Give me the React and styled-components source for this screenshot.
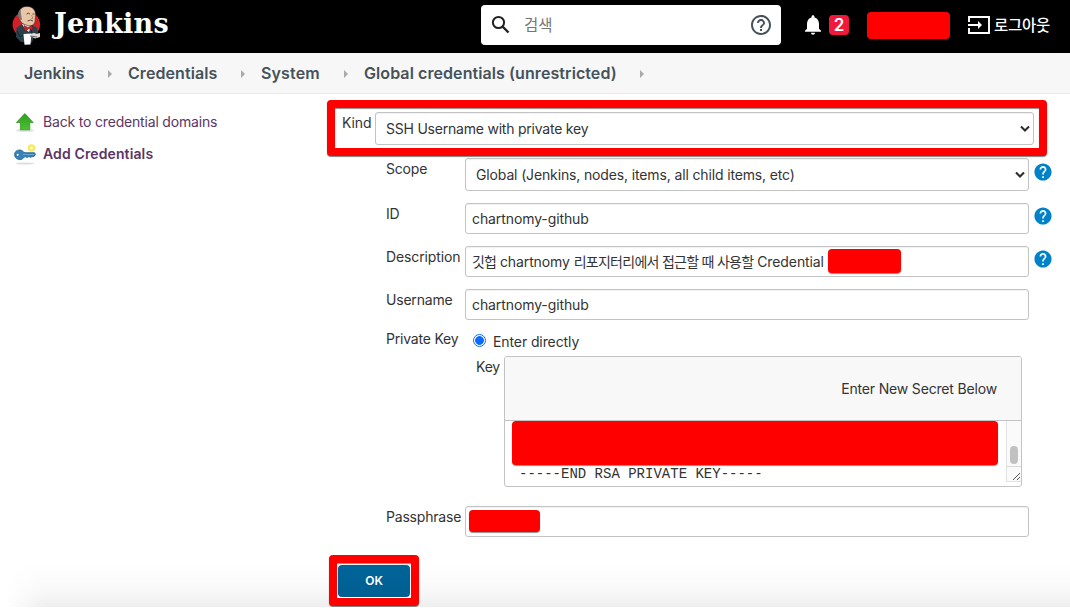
import React from "react";
import styled, { createGlobalStyle, css } from "styled-components";

const GlobalStyle = createGlobalStyle`
  * { box-sizing: border-box; }
  body {
    margin: 0;
    background: #fff;
    color: #333;
    font: 14px/20px Inter, "Noto Sans CJK KR", sans-serif;
  }
`;

const Page = styled.div`
  height: 607px;
  display: flex;
  flex-direction: column;
  background: #fff;
`;

const Header = styled.header`
  height: 53px;
  flex: none;
  display: flex;
  align-items: center;
  background: #000;
  color: #fff;
  padding: 0 0 3px 12px;
`;

const Brand = styled.a`
  flex: none;
  display: flex;
  align-items: center;
  width: 469px;
`;

const BrandName = styled.span`
  font: bold 27px/40px "DejaVu Serif", serif;
  letter-spacing: 0.2px;
  margin: -2px 0 0 13px;
`;

const SearchBox = styled.div`
  flex: none;
  width: 300px;
  height: 40px;
  display: flex;
  align-items: center;
  padding: 0 8px 0 10px;
  border-radius: 4px;
  background: #fff;
  color: #757575;
`;

const SearchText = styled.span`
  flex: 1;
  margin: -2px 0 0 13px;
  font: 15.5px/22px "Noto Sans CJK KR", sans-serif;
`;

const Alerts = styled.div`
  flex: none;
  display: flex;
  align-items: center;
  gap: 8px;
  margin-left: 24px;
`;

const Badge = styled.span`
  width: 20px;
  height: 20px;
  border-radius: 4px;
  background: #f0193c;
  font: 600 17px/20px Inter, sans-serif;
  text-align: center;
`;

const Redaction = styled.span`
  display: block;
  flex: none;
  width: ${(p) => p.$w}px;
  height: ${(p) => p.$h}px;
  border-radius: 4px;
  background: #f00;
  box-shadow: 0 1px 1px rgba(0, 0, 0, 0.45);
`;

const UserSlot = styled.div`
  margin-left: 18px;
`;

const Logout = styled.a`
  display: flex;
  align-items: center;
  margin-left: 18px;
  gap: 4px;
  white-space: nowrap;
  font: 500 15.5px/22px "Noto Sans CJK KR", sans-serif;
  letter-spacing: -0.3px;
`;

const LogoutText = styled.span`
  margin-top: -3px;
`;

const Breadcrumbs = styled.nav`
  height: 41px;
  flex: none;
  display: flex;
  align-items: center;
  padding-left: 24px;
  background: #f7f7f7;
  border-bottom: 1px solid #e6e9ea;
  color: #45525b;
  font-size: 16px;
  font-weight: 600;
`;

const Crumb = styled.span`
  letter-spacing: ${(p) => p.$ls}px;
  width: ${(p) => p.$w}px;
  white-space: nowrap;
`;

const Arrow = styled.i`
  margin: 1px 16px 0 24px;
  border-left: 4px solid #aaa;
  border-top: 4px solid transparent;
  border-bottom: 4px solid transparent;
`;

const Body = styled.div`
  flex: 1;
  display: flex;
  background:
    linear-gradient(to right, #fff 6px, rgba(255, 255, 255, 0) 46px),
    linear-gradient(to bottom, #fff 466px, #fcfcfc 484px, #f7f7f7 499px, #eee 513px);
`;

const Sidebar = styled.aside`
  width: 327px;
  flex: none;
  padding: 16px 0 0 14px;
`;

const Task = styled.a`
  display: flex;
  align-items: center;
  height: 24px;
  margin-bottom: 8px;
  gap: 7px;
  color: #5c3566;
  font-weight: ${(p) => (p.$active ? 600 : 400)};
  letter-spacing: ${(p) => p.$ls}px;
`;

const Form = styled.main`
  width: 725px;
  padding-top: 6px;
`;

const highlight = css`
  border: 8px solid #f00;
  border-radius: 4px;
  box-shadow: 0 1px 1px rgba(0, 0, 0, 0.5), inset 0 1px 1px rgba(0, 0, 0, 0.45);
  background: #fff;
`;

const KindFrame = styled.section`
  ${highlight}
  width: 720px;
  height: 56px;
  display: flex;
  padding: 4px 5px 0 7px;
`;

const Label = styled.label`
  flex: none;
  width: ${(p) => p.$w || 79}px;
  padding-top: ${(p) => p.$top}px;
  letter-spacing: ${(p) => p.$ls ?? -0.2}px;
  white-space: nowrap;
`;

const Row = styled.div`
  display: flex;
  align-items: flex-start;
  padding-left: 59px;
  margin-top: ${(p) => p.$gap}px;
`;

const Field = styled.div`
  width: ${(p) => p.$w || 564}px;
  height: ${(p) => (p.$select ? 33 : 31)}px;
  flex: none;
  display: flex;
  align-items: center;
  justify-content: ${(p) => (p.$select ? "space-between" : "flex-start")};
  padding: ${(p) => (p.$select ? "1px 3px 0 10px" : "1px 3px 0 6px")};
  border: 1px solid #c3c3c3;
  border-radius: 3px;
  background: #fff;
  box-shadow: inset 0 1px 1px rgba(0, 0, 0, 0.06);
  letter-spacing: ${(p) => p.$ls ?? -0.1}px;
  white-space: nowrap;
`;

const SecretField = styled(Field)`
  padding: 0 3px 1px;
`;

const Korean = styled.span`
  letter-spacing: ${(p) => p.$ls}px;
`;

const InlineMask = styled.div`
  margin: -2px 0 0 4px;
`;

const Help = styled.span`
  margin: ${(p) => p.$top}px 0 0 5px;
  height: 18px;
`;

const Radio = styled.span`
  width: 13px;
  height: 13px;
  margin: 5px 7px 0 8px;
  border: 1px solid #0a6cff;
  border-radius: 50%;
  background: radial-gradient(circle, #0a6cff 4px, #fff 4.7px);
`;

const SecretBox = styled.div`
  width: 518px;
  height: 131px;
  border: 1px solid #c3c3c3;
  border-radius: 3px;
  overflow: hidden;
  background: #fff;
`;

const SecretHeader = styled.div`
  height: 64px;
  padding: 22px 24px 0 0;
  border-bottom: 1px solid #c3c3c3;
  background: #f8f8f8;
  text-align: right;
  letter-spacing: -0.17px;
`;

const SecretBody = styled.div`
  display: flex;
  justify-content: space-between;
  padding-left: 7px;
`;

const KeyText = styled.code`
  display: block;
  padding: 1px 0 0 7px;
  font: 14px/17px "Courier New", "Liberation Mono", monospace;
`;

const Scrollbar = styled.div`
  width: 15px;
  height: 61px;
  display: flex;
  flex-direction: column;
  background: #fafafa;
  border-left: 1px solid #e2e2e2;
  border-bottom: 1px solid #e2e2e2;
`;

const Track = styled.div`
  height: 46px;
  flex: none;
  padding: 25px 0 0 3px;
  border-bottom: 1px solid #d8d8d8;
`;

const Thumb = styled.div`
  width: 8px;
  height: 18px;
  border-radius: 4px;
  background: #c1c1c1;
`;

const ButtonFrame = styled.div`
  ${highlight}
  width: 90px;
  height: 51px;
  margin: 18px 0 0 2px;
  padding: 2px 1px 0;
`;

const Button = styled.button`
  display: block;
  width: 72px;
  height: 32px;
  padding: 0;
  border: 0;
  border-radius: 4px;
  background: linear-gradient(#006499, #005f92);
  color: #fff;
  font: 600 12px/32px Inter, sans-serif;
`;

const Butler = () => (
  <svg width="29" height="39" viewBox="0 0 29 39">
    <ellipse cx="14.3" cy="18.5" rx="13.8" ry="13" fill="#d51f27" />
    <path d="M9 18.500 4.500 22 4 31 9 36 20 36.500 22 30 26 29 25 22 19 18Z" fill="#28424d" />
    <path d="M5 25 8 31 12 28M20 22 19 28" fill="none" stroke="#142830" strokeWidth="1" />
    <path d="M10 18 13 23 17 26 19 19Z" fill="#eee" />
    <path d="M6.500 10C6.500 3 10 .4 15 .4c6 0 8.500 4 8.500 8l-.5 7c-1 4-4 5-7.500 4-5-1-8-4-9-9.400Z" fill="#e9c6a5" stroke="#392f2b" strokeWidth=".6" />
    <path d="M6.500 11C5 9 6.500 5 8.500 3.500l.5 5 1 5-2 1Z" fill="#7b746c" />
    <path d="M14.500 8q2-1.500 3.500 0M20.500 8h2M15.500 15q3-2 5.500 0" fill="none" stroke="#5b483f" strokeWidth="1" />
    <path d="m19.500 9 1.500 3.500h-2" fill="none" stroke="#a77b5c" strokeWidth=".8" />
    <path d="m12 19.500 4 2 4-2 1 5-4-2-4 3Z" fill="#d51f27" stroke="#6c1015" strokeWidth=".5" />
    <path d="m11.500 28 8-.5-1 11-6 .2Z" fill="#fff" />
    <path d="M19 28q4-2 5 0l4-1v4l-5 1.500-4-2Z" fill="#e7d8cb" />
    <path d="M18 30l7 1" stroke="#314852" strokeWidth=".8" />
  </svg>
);

const SearchIcon = () => (
  <svg width="20" height="20" viewBox="0 0 20 20" fill="none" stroke="#222" strokeWidth="2">
    <circle cx="7.5" cy="7.5" r="5.6" />
    <path d="m11.5 11.5 6 6" strokeWidth="2.4" />
  </svg>
);

const HelpOutline = () => (
  <svg width="24" height="24" viewBox="0 0 24 24" fill="#45525b">
    <path d="M11 18h2v-2h-2v2zm1-16C6.480 2 2 6.480 2 12s4.480 10 10 10 10-4.480 10-10S17.520 2 12 2zm0 18c-4.410 0-8-3.590-8-8s3.590-8 8-8 8 3.590 8 8-3.590 8-8 8zm0-14c-2.210 0-4 1.790-4 4h2c0-1.100.9-2 2-2s2 .9 2 2c0 2-3 1.750-3 5h2c0-2.250 3-2.500 3-5 0-2.210-1.790-4-4-4z" />
  </svg>
);

const Bell = () => (
  <svg width="16" height="20" viewBox="4 2.5 16 19.5" fill="#fff">
    <path d="M12 22c1.1 0 2-.9 2-2h-4c0 1.1.89 2 2 2zm6-6v-5c0-3.07-1.64-5.64-4.5-6.32V4c0-.83-.67-1.5-1.5-1.5s-1.5.67-1.5 1.5v.68C7.63 5.36 6 7.92 6 11v5l-2 2v1h16v-1l-2-2z" />
  </svg>
);

const LogoutIcon = () => (
  <svg width="22" height="18" viewBox="0 0 22 18" fill="none" stroke="#fff" strokeWidth="1.9">
    <path d="M1 6V1h20v16H1v-5M0 9h12" />
    <path d="m10 5 4 4-4 4Z" fill="#fff" stroke="none" />
  </svg>
);

const UpArrow = () => (
  <svg width="22" height="20" viewBox="0 0 22 20">
    <ellipse cx="11" cy="18.500" rx="9" ry="1.300" fill="#ddd" />
    <path d="M10.800 1.500 19.200 10.500h-3.400v7.300H6.400v-7.300H2.400Z" fill="url(#green)" stroke="#2b8f1c" strokeWidth=".7" />
    <defs>
      <linearGradient id="green" x2="0" y2="1">
        <stop stopColor="#2e9d1d" />
        <stop offset="1" stopColor="#4cc232" />
      </linearGradient>
    </defs>
  </svg>
);

const KeyIcon = () => (
  <svg width="22" height="22" viewBox="0 0 22 22">
    <ellipse cx="11" cy="20.5" rx="9" ry="1" fill="#ddd" />
    <circle cx="17.5" cy="5" r="3.7" fill="#f8eb59" />
    <circle cx="17.5" cy="5" r="1.5" fill="#fffbc5" />
    <path d="M5.500 7C9 7 9 9.500 11 9.700h9.500l1 1.800-1.500 2h-2l-1.500 1-1.500-1-2 1-2-1C9 16 7 17 5 16.500-1 15.500-1 7 5.500 7Z" fill="#3684ba" stroke="#225f91" strokeWidth=".8" />
    <circle cx="3.7" cy="11.800" r="1.4" fill="#fff" stroke="#225f91" strokeWidth=".6" />
    <path d="M9 11.500h11" stroke="#75afd6" strokeWidth=".8" />
  </svg>
);

const Chevron = () => (
  <svg width="10" height="8" viewBox="0 0 10 8" fill="none" stroke="#2d2d2d" strokeWidth="2.1">
    <path d="m1 1.5 4 4 4-4" />
  </svg>
);

const HelpIcon = ({ top }) => (
  <Help $top={top}>
    <svg width="18" height="18" viewBox="1.5 1.5 21 21" fill="#0082cb">
      <path d="M12 2C6.48 2 2 6.48 2 12s4.480 10 10 10 10-4.480 10-10S17.520 2 12 2zm1 17h-2v-2h2v2zm2.070-7.750-.9.920C13.450 12.900 13 13.500 13 15h-2v-.5c0-1.100.450-2.100 1.170-2.830l1.240-1.260c.370-.360.590-.860.590-1.410 0-1.100-.9-2-2-2s-2 .9-2 2H8c0-2.210 1.790-4 4-4s4 1.790 4 4c0 .880-.360 1.680-.930 2.250z" />
    </svg>
  </Help>
);

const Grip = () => (
  <svg width="14" height="14" viewBox="0 0 14 14" stroke="#555" strokeWidth="1">
    <path d="m6 13 7-7M10 13l3-3" />
  </svg>
);

export default function App() {
  return (
    <Page>
      <GlobalStyle />
      <Header>
        <Brand>
          <Butler />
          <BrandName>Jenkins</BrandName>
        </Brand>
        <SearchBox>
          <SearchIcon />
          <SearchText>검색</SearchText>
          <HelpOutline />
        </SearchBox>
        <Alerts>
          <Bell />
          <Badge>2</Badge>
        </Alerts>
        <UserSlot>
          <Redaction $w={83} $h={27} />
        </UserSlot>
        <Logout>
          <LogoutIcon />
          <LogoutText>로그아웃</LogoutText>
        </Logout>
      </Header>
      <Breadcrumbs>
        <Crumb $w={60} $ls={0}>Jenkins</Crumb>
        <Arrow />
        <Crumb $w={89} $ls={0.08}>Credentials</Crumb>
        <Arrow />
        <Crumb $w={59} $ls={0.15}>System</Crumb>
        <Arrow />
        <Crumb $w={252} $ls={0.08}>Global credentials (unrestricted)</Crumb>
        <Arrow />
      </Breadcrumbs>
      <Body>
        <Sidebar>
          <Task $ls={-0.18}>
            <UpArrow />
            Back to credential domains
          </Task>
          <Task $active $ls={0.12}>
            <KeyIcon />
            Add Credentials
          </Task>
        </Sidebar>
        <Form>
          <KindFrame>
            <Label $w={33} $top={1} $ls={-0.1}>Kind</Label>
            <Field $select $w={659} $ls={-0.22}>
              SSH Username with private key
              <Chevron />
            </Field>
          </KindFrame>
          <Row $gap={2}>
            <Label $top={1}>Scope</Label>
            <Field $select $ls={-0.14}>
              Global (Jenkins, nodes, items, all child items, etc)
              <Chevron />
            </Field>
            <HelpIcon top={5} />
          </Row>
          <Row $gap={12}>
            <Label $top={1}>ID</Label>
            <Field>chartnomy-github</Field>
            <HelpIcon top={4} />
          </Row>
          <Row $gap={12}>
            <Label $top={1} $ls={-0.12}>Description</Label>
            <Field>
              <span>
                <Korean $ls={-0.85}>깃헙</Korean> chartnomy{" "}
                <Korean $ls={-0.73}>리포지터리에서 접근할 때 사용할</Korean> Credential
              </span>
              <InlineMask>
                <Redaction $w={73} $h={24} />
              </InlineMask>
            </Field>
            <HelpIcon top={4} />
          </Row>
          <Row $gap={12}>
            <Label $top={1}>Username</Label>
            <Field>chartnomy-github</Field>
          </Row>
          <Row $gap={9}>
            <Label $top={0}>Private Key</Label>
            <Radio />
            <Label $top={3} $w={100} $ls={-0.1}>Enter directly</Label>
          </Row>
          <Row $gap={4}>
            <Label $w={90} />
            <Label $w={28} $top={1}>Key</Label>
            <SecretBox>
              <SecretHeader>Enter New Secret Below</SecretHeader>
              <SecretBody>
                <div>
                  <Redaction $w={486} $h={44} />
                  <KeyText>-----END RSA PRIVATE KEY-----</KeyText>
                </div>
                <Scrollbar>
                  <Track>
                    <Thumb />
                  </Track>
                  <Grip />
                </Scrollbar>
              </SecretBody>
            </SecretBox>
          </Row>
          <Row $gap={19}>
            <Label $top={1}>Passphrase</Label>
            <SecretField>
              <Redaction $w={71} $h={22} />
            </SecretField>
          </Row>
          <ButtonFrame>
            <Button>OK</Button>
          </ButtonFrame>
        </Form>
      </Body>
    </Page>
  );
}
